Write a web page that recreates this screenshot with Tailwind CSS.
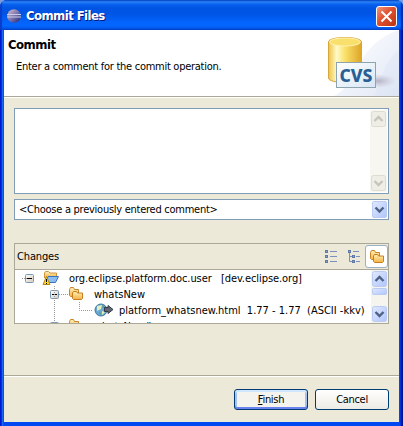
<!DOCTYPE html>
<html lang="en">
<head>
<meta charset="utf-8">
<title>Commit Files</title>
<script src="https://cdn.jsdelivr.net/npm/@tailwindcss/browser@4"></script>
</head>
<body class="w-[403px] h-[426px] overflow-hidden bg-[#7b9be0] font-['DejaVu_Sans_Condensed','DejaVu_Sans',sans-serif] text-[11px] leading-4 text-black">
<svg class="absolute h-0 w-0">
  <defs>
    <linearGradient id="fold" x1="0" y1="0" x2="0" y2="1"><stop offset="0" stop-color="#fff0b8"/><stop offset="1" stop-color="#f3b244"/></linearGradient>
    <linearGradient id="scr" x1="0" y1="0" x2="1" y2="1"><stop offset="0" stop-color="#e0e9ff"/><stop offset="1" stop-color="#b0c5fb"/></linearGradient>
    <linearGradient id="box" x1="0" y1="0" x2="1" y2="1"><stop offset="0" stop-color="#fff"/><stop offset="1" stop-color="#d2cbb9"/></linearGradient>
    <symbol id="folders" viewBox="0 0 16 16">
      <path d="M1.500 9.500V3.500L2.500 1.500H5.500L6.500 3.500H10.500V9.500L9.500 10.500H2.500Z" fill="url(#fold)" stroke="#cb832a"/>
      <path d="M4.500 12.500V7L5.500 5.500H8.500L9.500 7H14.500V12.500L13.500 13.500H5.500Z" fill="url(#fold)" stroke="#c87d20"/>
    </symbol>
    <symbol id="minus" viewBox="0 0 9 9">
      <rect x=".5" y=".5" width="8" height="8" rx="1" fill="url(#box)" stroke="#7898b5"/><path d="M2 4.500H7" stroke="#000"/>
    </symbol>
  </defs>
</svg>
<main class="flex h-full flex-col overflow-hidden rounded-t-[7px] bg-[linear-gradient(90deg,#0019cf_0_1px,#0831d9_1px_2px,#166aee_2px_3px,#0855dd_3px_4px,#0048f1_4px_400px,#0033d8_400px_401px,#001da0_401px_402px,#00138c_402px)]">
  <header class="flex h-[30px] shrink-0 items-center bg-[linear-gradient(180deg,#0347c8_0px,#2b83f5_2px,#0a63ee_4px,#0054e3_8px,#0055e5_14px,#0364fc_22px,#0366ff_26px,#0150dc_29px,#003dc8_30px)] pt-[2px] pl-[7px] pr-[6px] shadow-[inset_-2px_0_1px_#0a2bb0,inset_2px_0_1px_#0a3ccc]">
    <svg class="h-[14px] w-[14px]" viewBox="0 0 14 14"><defs><linearGradient id="ec" x1="0" y1="0" x2="1" y2="1"><stop offset="0" stop-color="#e0c0cc"/><stop offset=".5" stop-color="#7a76ae"/><stop offset="1" stop-color="#25206c"/></linearGradient></defs><circle cx="7" cy="7" r="6.800" fill="url(#ec)"/><path d="M0 5.500H14M0 8H14" stroke="#c9cdec"/></svg>
    <h1 class="ml-[5px] text-[13px] font-bold tracking-[-0.57px] text-white [text-shadow:1px_1px_0_#0a1883]">Commit Files</h1>
    <svg class="ml-auto h-[21px] w-[21px]" viewBox="0 0 21 21"><defs><linearGradient id="cl" x1="0" y1="0" x2="1" y2="1"><stop offset="0" stop-color="#f0997f"/><stop offset=".45" stop-color="#e0502e"/><stop offset="1" stop-color="#b83212"/></linearGradient></defs><rect x=".5" y=".5" width="20" height="20" rx="2.500" fill="url(#cl)" stroke="#fff"/><path d="M5.500 5.500L15.500 15.500M15.500 5.500L5.500 15.500" stroke="#fff" stroke-width="2"/></svg>
  </header>
  <div class="mx-1 mb-1 flex min-h-0 grow flex-col bg-[#ece9d8]">
  <section class="flex h-[68px] shrink-0 border-b border-white bg-white">
    <div class="flex w-full justify-between border-b border-[#aca899]">
      <div class="pl-[4px] pt-[7px]">
        <h2 class="text-[13px] font-bold tracking-[-0.5px]">Commit</h2>
        <p class="ml-2 mt-[6px] tracking-[-0.27px]">Enter a comment for the commit operation.</p>
      </div>
      <svg class="h-[66px] w-[75px] shrink-0" viewBox="0 0 75 66">
        <defs>
          <linearGradient id="cy"><stop offset="0" stop-color="#ecc448"/><stop offset=".25" stop-color="#fffbc8"/><stop offset=".5" stop-color="#fbe06a"/><stop offset="1" stop-color="#dda526"/></linearGradient>
          <linearGradient id="bg1" x1="0" x2="1" y1="0" y2="1"><stop offset=".1" stop-color="#fff"/><stop offset="1" stop-color="#dfe6f5"/></linearGradient>
          <linearGradient id="cd" x1="0" x2="1" y1="0" y2="1"><stop offset="0" stop-color="#fff"/><stop offset="1" stop-color="#d7e6f4"/></linearGradient>
          <radialGradient id="sh"><stop offset="0" stop-color="#a8a2b8" stop-opacity=".8"/><stop offset="1" stop-color="#c0bccc" stop-opacity="0"/></radialGradient>
        </defs>
        <path d="M75 0V66H10C35 55 30 15 75 0Z" fill="url(#bg1)"/>
        <path d="M75 20V66H50C58 50 60 30 75 20Z" fill="#dce4f4" opacity=".4"/>
        <ellipse cx="54" cy="51" rx="18" ry="7" fill="url(#sh)"/>
        <path d="M4.500 12C4.500 6 37.500 6 37.500 12V48C37.500 54 4.500 54 4.500 48Z" fill="url(#cy)" stroke="#d9a43a"/>
        <ellipse cx="21" cy="12" rx="15.500" ry="4" fill="#f9df6c" stroke="#fff3b0"/>
        <rect x="12.500" y="32.500" width="39" height="25" fill="url(#cd)" stroke="#8da4ae"/>
        <text x="15.500" y="51.500" font-family="Noto Sans" font-size="17" font-weight="800" fill="#285f94" textLength="33" lengthAdjust="spacingAndGlyphs">CVS</text>
      </svg>
    </div>
  </section>
  <section class="flex min-h-0 grow flex-col px-[10px] pt-[10px]">
    <div class="flex h-[86px] shrink-0 justify-end border border-[#7f9db9] bg-white p-[1px]">
      <svg class="h-[82px] w-[17px]" viewBox="0 0 17 82"><rect width="17" height="82" fill="#f7f6f1"/><g fill="#efeee6" stroke="#dedbd0"><rect x="1.500" y="1.500" width="14" height="15" rx="2"/><rect x="1.500" y="65.500" width="14" height="15" rx="2"/></g><path d="M4.500 11L8.500 7L12.500 11M4.500 71L8.500 75L12.500 71" fill="none" stroke="#c6c4bb" stroke-width="2.400"/></svg>
    </div>
    <div class="mt-[5px] flex h-[21px] shrink-0 items-center justify-between border border-[#7f9db9] bg-white pl-1 pr-[1px]">
      <span class="pt-px tracking-[-0.26px]">&lt;Choose a previously entered comment&gt;</span>
      <svg class="h-[17px] w-[15px]" viewBox="0 0 15 17"><rect x=".5" y=".5" width="14" height="16" rx="1.500" fill="url(#scr)" stroke="#b9cbf3"/><path d="M3.500 6.500L7.500 10.500L11.500 6.500" fill="none" stroke="#4d6185" stroke-width="2.400"/></svg>
    </div>
    <div class="mt-[23px] flex h-[81px] shrink-0 flex-col border border-[#aca899]">
      <div class="flex h-[26px] shrink-0 items-center border-b border-[#aca899] pl-[2px]">
        <span class="tracking-[-0.15px]">Changes</span>
        <svg class="ml-auto h-[13px] w-3" viewBox="0 0 12 13"><g fill="#8fa5cb" stroke="#6079a8"><rect x=".5" y=".5" width="2" height="2"/><rect x=".5" y="5.500" width="2" height="2"/><rect x=".5" y="10.500" width="2" height="2"/></g><path d="M5 1.500H12M5 6.500H12M5 11.500H12" stroke="#7b90ba"/></svg>
        <svg class="ml-[11px] h-[13px] w-3" viewBox="0 0 12 13"><path d="M1.500 2V11.500H5M1.500 6.500H5M5 1.500H11M8 6.500H12M8 11.500H12" fill="none" stroke="#7b90ba"/><g fill="#8fa5cb" stroke="#6079a8"><rect x=".5" y=".5" width="2" height="2"/><rect x="4.500" y="5.500" width="2" height="2"/><rect x="4.500" y="10.500" width="2" height="2"/></g></svg>
        <div class="ml-[5px] flex h-[23px] w-[23px] items-center justify-center rounded-[3px] border border-[#9ab0c4] bg-white"><svg class="h-4 w-4"><use href="#folders"/></svg></div>
      </div>
      <div class="flex min-h-0 grow justify-between bg-white">
        <div class="relative flex flex-col overflow-hidden whitespace-pre">
          <svg class="absolute left-0 top-0 h-[54px] w-20" viewBox="0 0 80 54"><path d="M7 8.500H12M39.500 16V54M44 24.500H53M64.500 32V40.500H78" fill="none" stroke="#9a9a9a" stroke-dasharray="1 1"/></svg>
          <div class="flex h-4 shrink-0 items-center pl-[10px]"><svg class="mt-px h-[9px] w-[9px]"><use href="#minus"/></svg>
            <svg class="ml-[9px] h-4 w-4 overflow-visible" viewBox="0 0 16 16"><path d="M1.500 8V3L2.500 1.500H5.500L7 3H13.500V8Z" fill="url(#fold)" stroke="#d09340"/><path d="M5 6.500H15.500L12.500 12.500H3Z" fill="#8dbcf2" stroke="#3c72b8"/><path d="M3.500 6.500L7 14.500H0Z" fill="#ffd82e" stroke="#b58a14" stroke-linejoin="round"/><path d="M3.500 9V12M3.500 13V14" stroke="#000"/></svg>
            <span class="ml-[10px] pt-[2px] tracking-[-0.07px]">org.eclipse.platform.doc.user   [dev.eclipse.org]</span></div>
          <div class="flex h-4 shrink-0 items-center pl-[35px]"><svg class="mt-px h-[9px] w-[9px]"><use href="#minus"/></svg><svg class="ml-[9px] h-4 w-4"><use href="#folders"/></svg><span class="ml-[10px] pt-[2px]">whatsNew</span></div>
          <div class="flex h-4 shrink-0 items-center pl-[79px]"><svg class="h-4 w-5" viewBox="0 0 20 16"><circle cx="7" cy="8" r="6" fill="#69a8d5" stroke="#39789f"/><path d="M3 4L8 3L7 7L3 9ZM8 9L11 10L8 13Z" fill="#e7edbd"/><path d="M5 10L7 11L6 13ZM8 3L11 5L9 6Z" fill="#5f9a5c"/><path d="M10.500 5.500H14V3.500L19 7.500L14 11.500V9.500H10.500Z" fill="#636773" stroke="#343846"/></svg><span class="ml-[5px] pt-[2px]">platform_whatsnew.html  1.77 - 1.77  (ASCII -kkv)</span></div>
          <div class="flex h-4 shrink-0 items-center pl-[35px]"><svg class="mt-px h-[9px] w-[9px]"><use href="#minus"/></svg><svg class="ml-[9px] h-4 w-4"><use href="#folders"/></svg><span class="ml-[10px] pt-px">whatsNew/images</span></div>
        </div>
        <svg class="h-[53px] w-[17px] shrink-0" viewBox="0 0 17 53"><rect width="17" height="53" fill="#f5f4ef"/><g fill="url(#scr)" stroke="#b9cbf3"><rect x="1.500" y="1.500" width="14" height="15" rx="2"/><rect x="1.500" y="18.500" width="14" height="6" rx="1"/><rect x="1.500" y="36.500" width="14" height="15" rx="2"/></g><path d="M4.500 11L8.500 7L12.500 11M4.500 42L8.500 46L12.500 42" fill="none" stroke="#4d6185" stroke-width="2.400"/></svg>
      </div>
    </div>
  </section>
  <footer class="flex h-[47px] shrink-0 justify-end gap-[7px] border-t border-[#aca899] pr-[10px] pt-[13px] shadow-[inset_0_1px_0_#fff]">
    <button class="h-[21px] w-[74px] rounded-[3px] border border-[#003c74] bg-[#f4f3ee] tracking-[-0.3px] shadow-[inset_0_-2px_0_#6982ee,inset_0_2px_0_#cee7ff,inset_0_0_0_2px_#a5c1f2]"><u>F</u>inish</button>
    <button class="h-[21px] w-[74px] rounded-[3px] border border-[#003c74] bg-linear-to-b from-white to-[#ecebe5] tracking-[-0.3px]">Cancel</button>
  </footer>
  </div>
</main>
</body>
</html>
